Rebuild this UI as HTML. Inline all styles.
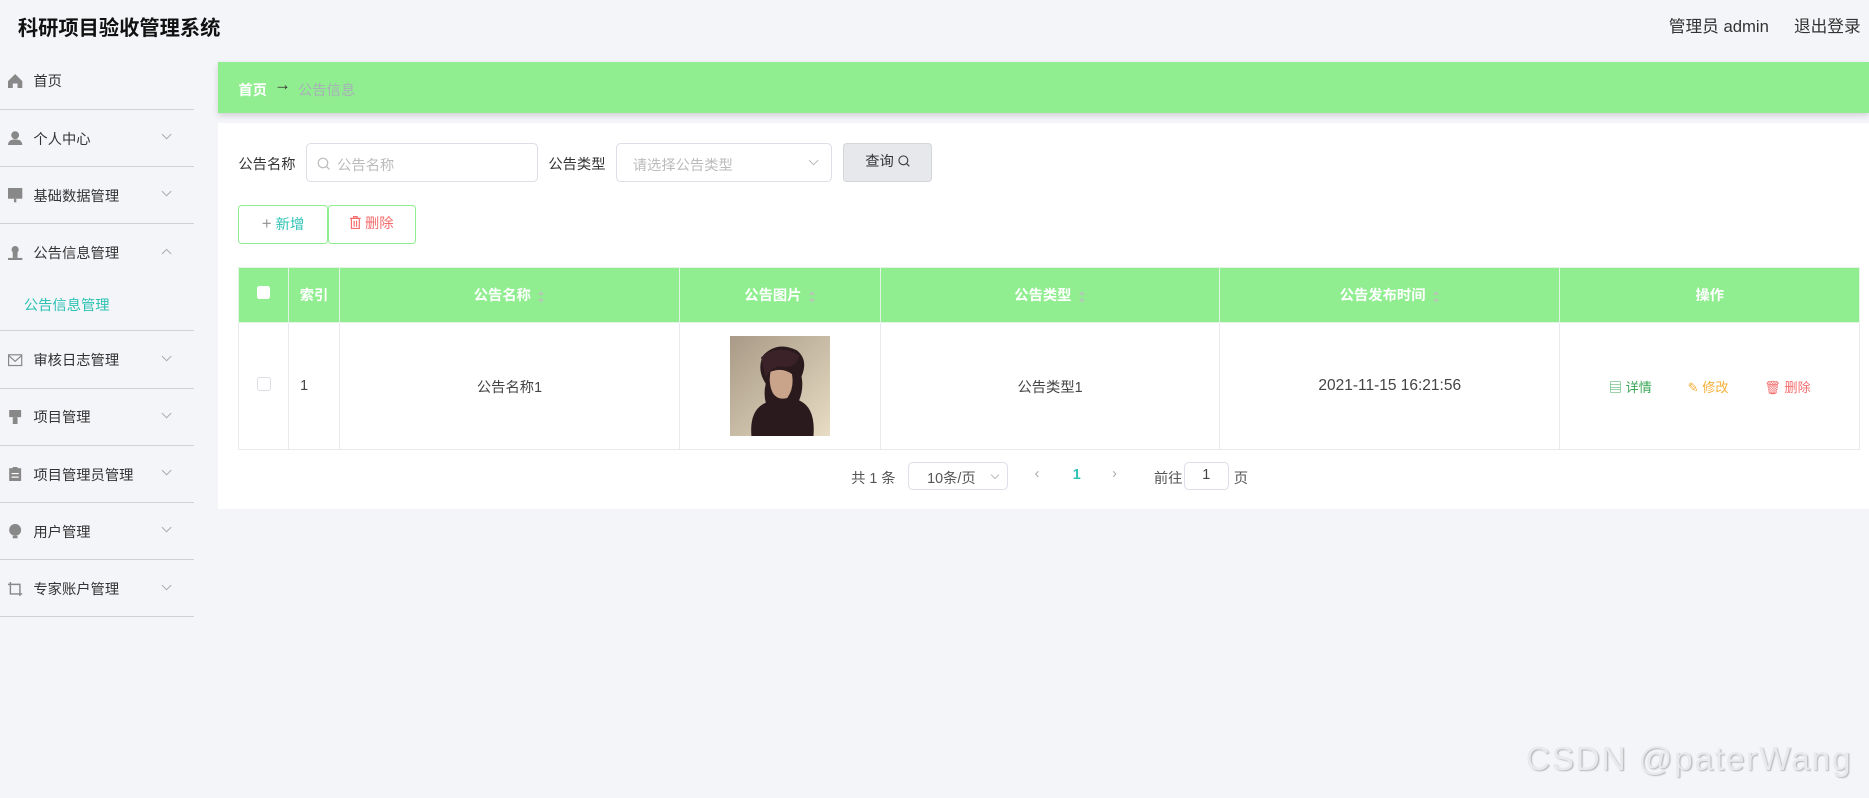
<!DOCTYPE html>
<html><head><meta charset="utf-8"><style>
*{margin:0;padding:0;box-sizing:border-box}
html,body{width:1869px;height:798px;overflow:hidden;background:#f4f5f9}
#w{zoom:1.192;width:1568px;height:669px;position:relative;font-family:"Liberation Sans","Noto Sans CJK SC",sans-serif;color:#333}
.a{position:absolute}
.title{left:15px;top:9px;font-size:17px;font-weight:bold;color:#111}
.hr{top:11px;font-size:14px;color:#333}
.side{left:0;top:44px;width:163px}
.it{position:relative;height:48px;border-bottom:1px solid #d0d2d6;font-size:12px;color:#333}
.it span{position:absolute;left:28px;top:15px}
.it i{position:absolute;left:7px;top:18px;width:12px;height:12px}
.it b{position:absolute;left:137px;top:18px;width:6px;height:6px;border-right:1px solid #aaa;border-bottom:1px solid #aaa;transform:rotate(45deg)}
.it b.up{transform:rotate(-135deg);top:22px}
.sub{height:42px;position:relative;font-size:12px;color:#2ec2b4;border-bottom:1px solid #d0d2d6}
.sub span{position:absolute;left:20px;top:11px}
.banner{left:183px;top:52px;width:1385px;height:43px;background:#90ee90;box-shadow:0 2px 5px rgba(0,0,0,.15);font-size:12px}
.panel{left:183px;top:103px;width:1385px;height:324px;background:#fff}
.lbl{font-size:12px;color:#333}
.inp{border:1px solid #dcdfe6;border-radius:4px;background:#fff;font-size:12px;color:#bbb}
.btn{border:1px solid #90ee90;border-radius:3px;background:#fff;font-size:12px;text-align:center;line-height:31px}
table{border-collapse:collapse;position:absolute;left:200px;top:224px;width:1360px;table-layout:fixed;font-size:12px}
td,th{border:1px solid #e8eaee;text-align:center}
th{background:#90ee90;color:#fff;height:46px;font-weight:bold;border-color:#e4f4e4}
td{height:107px;color:#444}
.srt{display:inline-block;width:6px;height:10px;vertical-align:middle;margin-left:6px;position:relative}
.srt:before,.srt:after{content:"";position:absolute;left:0;border-left:3px solid transparent;border-right:3px solid transparent}
.srt:before{top:0;border-bottom:4px solid #b4c8b8}.srt:after{bottom:0;border-top:4px solid #b4c8b8}
</style></head><body><div id="w">
<div class="a title">科研项目验收管理系统</div>
<div class="a hr" style="left:1400px">管理员 admin</div>
<div class="a hr" style="left:1505px">退出登录</div>

<div class="a side">
<div class="it"><i><svg width="12" height="12"><path d="M0 6L6 0L12 6V12H8V8H4V12H0Z" fill="#888"/></svg></i><span>首页</span></div>
<div class="it"><i><svg width="12" height="12"><circle cx="6" cy="3.5" r="3.3" fill="#888"/><path d="M0 12Q0 7 6 7Q12 7 12 12Z" fill="#888"/></svg></i><span>个人中心</span><b></b></div>
<div class="it"><i><svg width="12" height="12"><rect x="0" y="0" width="12" height="9" fill="#888"/><rect x="5" y="9" width="2" height="3" fill="#888"/></svg></i><span>基础数据管理</span><b></b></div>
<div class="it" style="border:0"><i><svg width="12" height="12"><circle cx="6" cy="3" r="3" fill="#888"/><rect x="4" y="5" width="4" height="5" fill="#888"/><rect x="0" y="10" width="12" height="2" fill="#888"/></svg></i><span>公告信息管理</span><b class="up"></b></div>
<div class="sub"><span>公告信息管理</span></div>
<div class="it"><i><svg width="12" height="12"><rect x=".5" y="1.5" width="11" height="9" fill="none" stroke="#888"/><path d="M.5 2L6 7L11.5 2" fill="none" stroke="#888"/></svg></i><span>审核日志管理</span><b></b></div>
<div class="it"><i><svg width="12" height="12"><rect x="1" y="0" width="10" height="6" fill="#888"/><rect x="4" y="6" width="4" height="6" fill="#888"/></svg></i><span>项目管理</span><b></b></div>
<div class="it"><i><svg width="12" height="12"><rect x="1" y="1" width="10" height="11" fill="#888"/><rect x="4" y="0" width="4" height="2" fill="#888"/><rect x="3" y="5" width="6" height="1" fill="#fff"/><rect x="3" y="8" width="6" height="1" fill="#fff"/></svg></i><span>项目管理员管理</span><b></b></div>
<div class="it"><i><svg width="12" height="12"><circle cx="6" cy="5" r="5" fill="#888"/><rect x="4" y="10" width="4" height="2" fill="#888"/></svg></i><span>用户管理</span><b></b></div>
<div class="it"><i><svg width="12" height="12"><path d="M2 0V10H12M0 2H10V12" fill="none" stroke="#888" stroke-width="1.2"/></svg></i><span>专家账户管理</span><b></b></div>
</div>

<div class="a banner"><span class="a" style="left:17px;top:14px;color:#fff;font-weight:bold">首页</span><span class="a" style="left:47px;top:11px;color:#333;font-size:14px">→</span><span class="a" style="left:67px;top:14px;color:#a8b0b8">公告信息</span></div>
<div class="a panel"></div>

<div class="a lbl" style="left:200px;top:128px">公告名称</div>
<div class="a inp" style="left:257px;top:120px;width:194px;height:33px"><svg class="a" style="left:8px;top:11px" width="11" height="11"><circle cx="5" cy="5" r="4" fill="none" stroke="#bbb"/><path d="M8 8L10.5 10.5" stroke="#bbb"/></svg><span class="a" style="left:25px;top:8px">公告名称</span></div>
<div class="a lbl" style="left:460px;top:128px">公告类型</div>
<div class="a inp" style="left:517px;top:120px;width:181px;height:33px"><span class="a" style="left:13px;top:8px">请选择公告类型</span><span class="a" style="left:162px;top:11px;width:6px;height:6px;border-right:1px solid #bbb;border-bottom:1px solid #bbb;transform:rotate(45deg)"></span></div>
<div class="a" style="left:707px;top:120px;width:75px;height:33px;background:#e6e8ec;border:1px solid #d4d6da;border-radius:3px;font-size:12px;line-height:31px;text-align:center;color:#333">查询 <svg width="10" height="10" style="vertical-align:-1px"><circle cx="4.5" cy="4.5" r="3.7" fill="none" stroke="#444"/><path d="M7.3 7.3L9.5 9.5" stroke="#444"/></svg></div>

<div class="a btn" style="left:200px;top:172px;width:75px;height:33px;color:#2ec2b4"><span style="color:#999;font-size:14px">+</span> 新增</div>
<div class="a btn" style="left:275px;top:172px;width:74px;height:33px;color:#f56c6c"><svg width="9" height="11" style="vertical-align:-1px"><path d="M0 2H9M3 2V.5H6V2M1.2 2V10.5H7.8V2M3.5 4V9M5.5 4V9" fill="none" stroke="#f56c6c"/></svg> 删除</div>

<table>
<colgroup><col style="width:42px"><col style="width:42px"><col style="width:286px"><col style="width:168px"><col style="width:285px"><col style="width:285px"><col style="width:252px"></colgroup>
<tr><th><span style="display:inline-block;width:11px;height:11px;background:#fff;border-radius:2px"></span></th><th>索引</th><th>公告名称<i class="srt"></i></th><th>公告图片<i class="srt"></i></th><th>公告类型<i class="srt"></i></th><th>公告发布时间<i class="srt"></i></th><th>操作</th></tr>
<tr><td><span style="display:inline-block;width:12px;height:12px;border:1px solid #dcdfe6;border-radius:2px"></span></td><td style="text-align:left;padding-left:9px">1</td><td>公告名称1</td>
<td><svg width="84" height="84" style="display:block;margin:0 auto" viewBox="0 0 84 84"><defs><linearGradient id="g" x1="0" y1="0" x2="1" y2="1"><stop offset="0" stop-color="#a89a86"/><stop offset="1" stop-color="#e8dcc4"/></linearGradient></defs><rect width="84" height="84" fill="url(#g)"/><path d="M18 84Q16 62 30 56Q28 48 30 40Q22 28 28 16Q40 4 56 12Q66 20 60 34Q62 44 58 54Q72 60 70 84Z" fill="#2a1a1e"/><path d="M34 30Q44 26 52 32Q54 44 48 52Q40 54 36 48Q32 40 34 30Z" fill="#c9a48a"/><path d="M26 18Q40 6 58 16Q56 26 46 26Q36 24 30 34Z" fill="#3a2228"/></svg></td>
<td>公告类型1</td><td style="font-size:13px">2021-11-15 16:21:56</td>
<td style="font-size:11px"><span style="color:#3aa655">▤ 详情</span><span style="color:#f5b03a;margin-left:30px">✎ 修改</span><span style="color:#f56c6c;margin-left:30px">🗑︎ 删除</span></td></tr>
</table>

<div class="a lbl" style="left:714px;top:392px;color:#555">共 1 条</div>
<div class="a inp" style="left:762px;top:388px;width:84px;height:23px;color:#555"><span class="a" style="left:15px;top:3px">10条/页</span><span class="a" style="left:69px;top:7px;width:5px;height:5px;border-right:1px solid #bbb;border-bottom:1px solid #bbb;transform:rotate(45deg)"></span></div>
<div class="a" style="left:868px;top:391px;font-size:12px;color:#aaa">‹</div>
<div class="a" style="left:900px;top:392px;font-size:12px;color:#2ec2b4;font-weight:bold">1</div>
<div class="a" style="left:933px;top:391px;font-size:12px;color:#aaa">›</div>
<div class="a lbl" style="left:968px;top:392px;color:#555">前往</div>
<div class="a inp" style="left:993px;top:388px;width:38px;height:23px;color:#444;text-align:center;line-height:21px">1</div>
<div class="a lbl" style="left:1035px;top:392px;color:#555">页</div>

<div class="a" style="left:1280px;top:622px;font-size:28px;letter-spacing:1.5px;color:#e8e9ec;text-shadow:1px 1px 1px #b8b8b8;font-family:'Liberation Sans',sans-serif;white-space:nowrap">CSDN @paterWang</div>
</div></body></html>
